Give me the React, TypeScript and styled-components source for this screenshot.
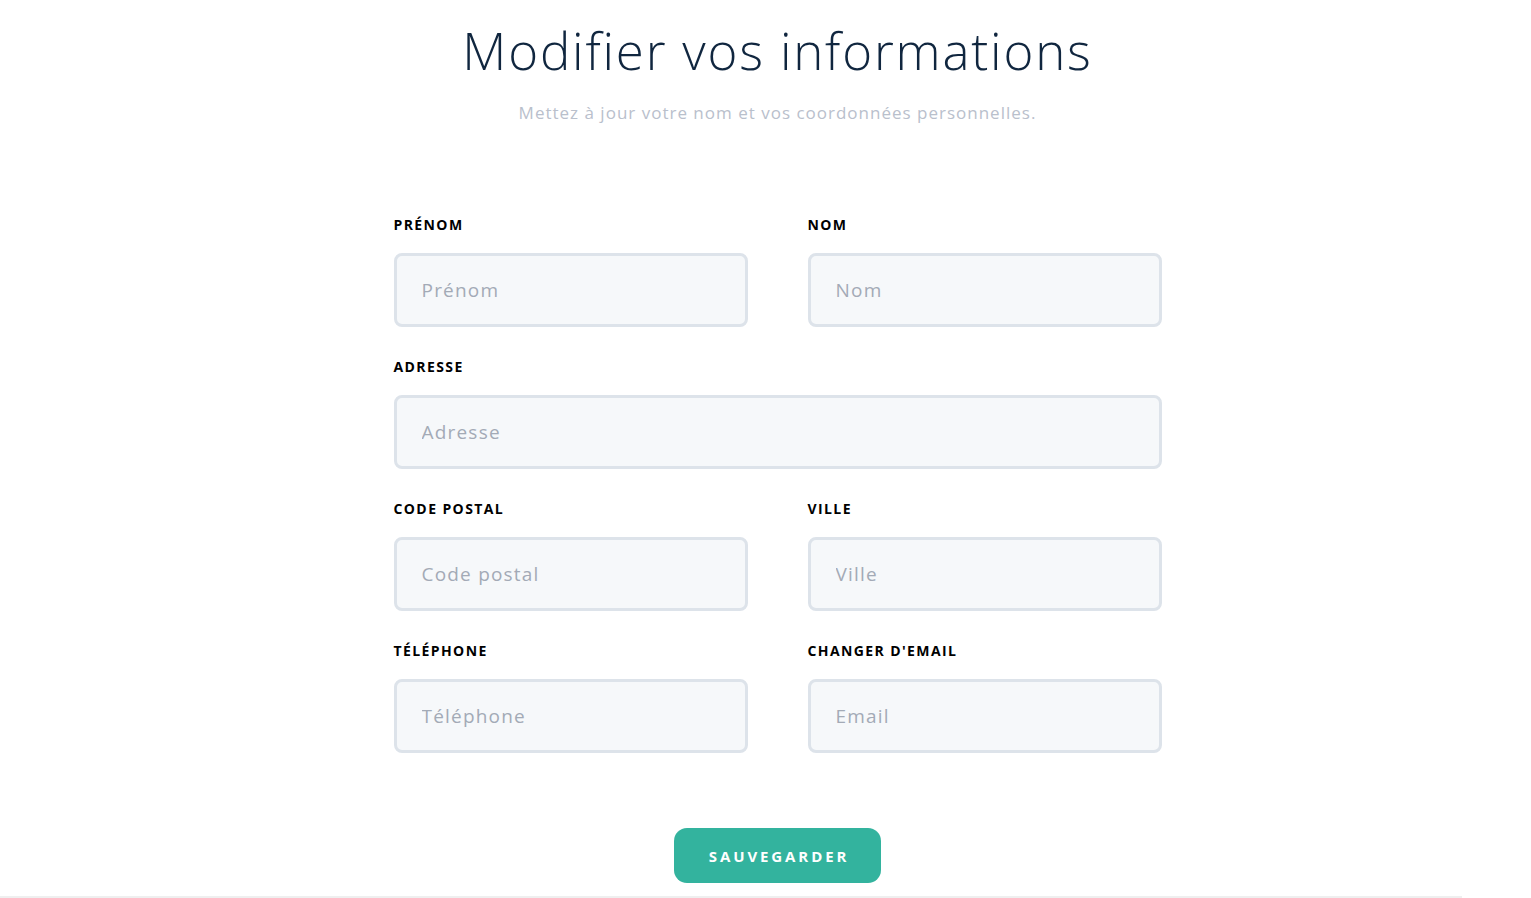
import React from "react";
import styled, { createGlobalStyle } from "styled-components";

const Global = createGlobalStyle`
  html, body { margin: 0; padding: 0; background: #ffffff; }
  body { font-family: "Open Sans", "Noto Sans", sans-serif; overflow: hidden; }
  * { box-sizing: border-box; }
`;

const Page = styled.div`
  padding-left: 24px;
  display: flex;
  flex-direction: column;
  align-items: center;
  min-height: 896px;
`;

const Title = styled.h1`
  margin: 18px 0 0;
  font-size: 51px;
  line-height: 64px;
  font-weight: 300;
  color: #10263f;
  letter-spacing: 1.8px;
`;

const Subtitle = styled.p`
  margin: 19px 0 0;
  font-size: 17px;
  line-height: 24px;
  font-weight: 400;
  color: #b9c0cc;
  letter-spacing: 1px;
`;

const Form = styled.form`
  margin-top: 92px;
  width: 768px;
  display: grid;
  grid-template-columns: 1fr 1fr;
  column-gap: 60px;
  row-gap: 32px;
`;

const Field = styled.div<{ $wide?: boolean }>`
  display: flex;
  flex-direction: column;
  gap: 20px;
  grid-column: ${(p) => (p.$wide ? "1 / span 2" : "auto")};
`;

const Label = styled.label`
  font-size: 14px;
  line-height: 16px;
  font-weight: 700;
  color: #000000;
  letter-spacing: 1.4px;
  text-transform: uppercase;
`;

const Input = styled.input`
  height: 74px;
  width: 100%;
  border: 3px solid #dde3ea;
  border-radius: 8px;
  background: #f6f8fa;
  padding: 0 25px;
  font-family: inherit;
  font-size: 19px;
  letter-spacing: 1.2px;
  color: #10263f;
  outline: none;
  &::placeholder { color: #a3aab6; }
`;

const Button = styled.button`
  margin-top: 75px;
  width: 207px;
  height: 55px;
  border: none;
  border-radius: 13px;
  background: #33b39e;
  color: #ffffff;
  font-family: inherit;
  font-size: 15px;
  font-weight: 700;
  letter-spacing: 2.9px;
  padding: 0 0 0 3px;
  cursor: pointer;
`;

const Strip = styled.div`
  margin-top: 13px;
  width: 1462px;
  height: 2px;
  background: #efefef;
  align-self: flex-start;
  margin-left: -24px;
`;

const fields: { label: string; placeholder: string; wide?: boolean }[] = [
  { label: "Prénom", placeholder: "Prénom" },
  { label: "Nom", placeholder: "Nom" },
  { label: "Adresse", placeholder: "Adresse", wide: true },
  { label: "Code postal", placeholder: "Code postal" },
  { label: "Ville", placeholder: "Ville" },
  { label: "Téléphone", placeholder: "Téléphone" },
  { label: "Changer d'email", placeholder: "Email" },
];

export default function App() {
  return (
    <>
      <Global />
      <Page>
        <Title>Modifier vos informations</Title>
        <Subtitle>Mettez à jour votre nom et vos coordonnées personnelles.</Subtitle>
        <Form onSubmit={(e) => e.preventDefault()}>
          {fields.map((f) => (
            <Field key={f.label} $wide={f.wide}>
              <Label>{f.label}</Label>
              <Input placeholder={f.placeholder} />
            </Field>
          ))}
        </Form>
        <Button type="button">SAUVEGARDER</Button>
        <Strip />
      </Page>
    </>
  );
}
